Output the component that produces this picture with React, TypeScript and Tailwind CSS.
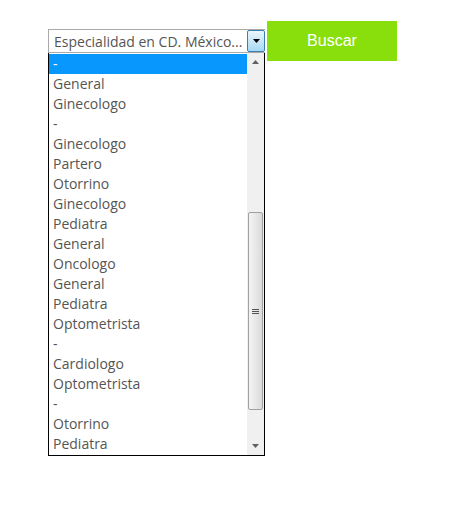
import React from "react";

const items = [
  "-",
  "General",
  "Ginecologo",
  "-",
  "Ginecologo",
  "Partero",
  "Otorrino",
  "Ginecologo",
  "Pediatra",
  "General",
  "Oncologo",
  "General",
  "Pediatra",
  "Optometrista",
  "-",
  "Cardiologo",
  "Optometrista",
  "-",
  "Otorrino",
  "Pediatra",
];

export default function App() {
  return (
    <div className="w-[453px] h-[532px] bg-white" style={{ fontFamily: '"Open Sans", sans-serif' }}>
      <div className="flex items-start pt-[21px] pl-[48px] gap-[2px]">
        <div className="mt-[8px] w-[217px] flex flex-col">
          {/* closed select */}
          <div className="h-[24px] border border-[#a9a9a9] border-r-0 flex items-stretch bg-white">
            <div className="flex-1 flex items-center pl-[5px] pt-[1px] text-[14px] text-[#555] leading-none overflow-hidden whitespace-nowrap">
              Especialidad en CD. México...
            </div>
            <div className="w-[18px] border border-[#3c7fb1] rounded-[2px] bg-gradient-to-b from-[#eaf6fd] to-[#a7d9f5] flex items-center justify-center">
              <svg width="7" height="4" viewBox="0 0 7 4">
                <path d="M0 0 H7 L3.5 4 Z" fill="#000" />
              </svg>
            </div>
          </div>
          {/* open list */}
          <div className="h-[403px] border border-black border-t-0 flex bg-white">
            <div className="flex-1 flex flex-col pt-[1px] text-[14px] text-[#555]">
              {items.map((t, i) => (
                <div
                  key={i}
                  className={
                    "h-[20px] leading-[20px] pl-[4px] " +
                    (i === 0 ? "bg-[#0897fc] text-white" : "")
                  }
                >
                  {t}
                </div>
              ))}
            </div>
            <div className="w-[17px] bg-[#f0f0f0] flex flex-col items-center">
              <div className="h-[18px] w-full flex items-center justify-center">
                <svg width="7" height="4" viewBox="0 0 7 4">
                  <path d="M3.5 0 L7 4 H0 Z" fill="#606060" />
                </svg>
              </div>
              <div className="h-[141px]" />
              <div className="h-[198px] w-[15px] rounded-[2px] border border-[#a0a0a0] bg-gradient-to-r from-[#f4f4f4] via-[#e8e8e8] to-[#dadada] flex items-center justify-center">
                <div className="flex flex-col gap-[1px]">
                  <div className="w-[7px] h-[1px] bg-[#555]" />
                  <div className="w-[7px] h-[1px] bg-[#555]" />
                  <div className="w-[7px] h-[1px] bg-[#555]" />
                </div>
              </div>
              <div className="flex-1" />
              <div className="h-[18px] w-full flex items-center justify-center">
                <svg width="7" height="4" viewBox="0 0 7 4">
                  <path d="M0 0 H7 L3.5 4 Z" fill="#606060" />
                </svg>
              </div>
            </div>
          </div>
        </div>
        <button
          className="w-[130px] h-[40px] bg-[#89df0c] text-white text-[16px]"
          style={{ fontFamily: '"Liberation Sans", Arial, sans-serif' }}
        >
          Buscar
        </button>
      </div>
    </div>
  );
}
